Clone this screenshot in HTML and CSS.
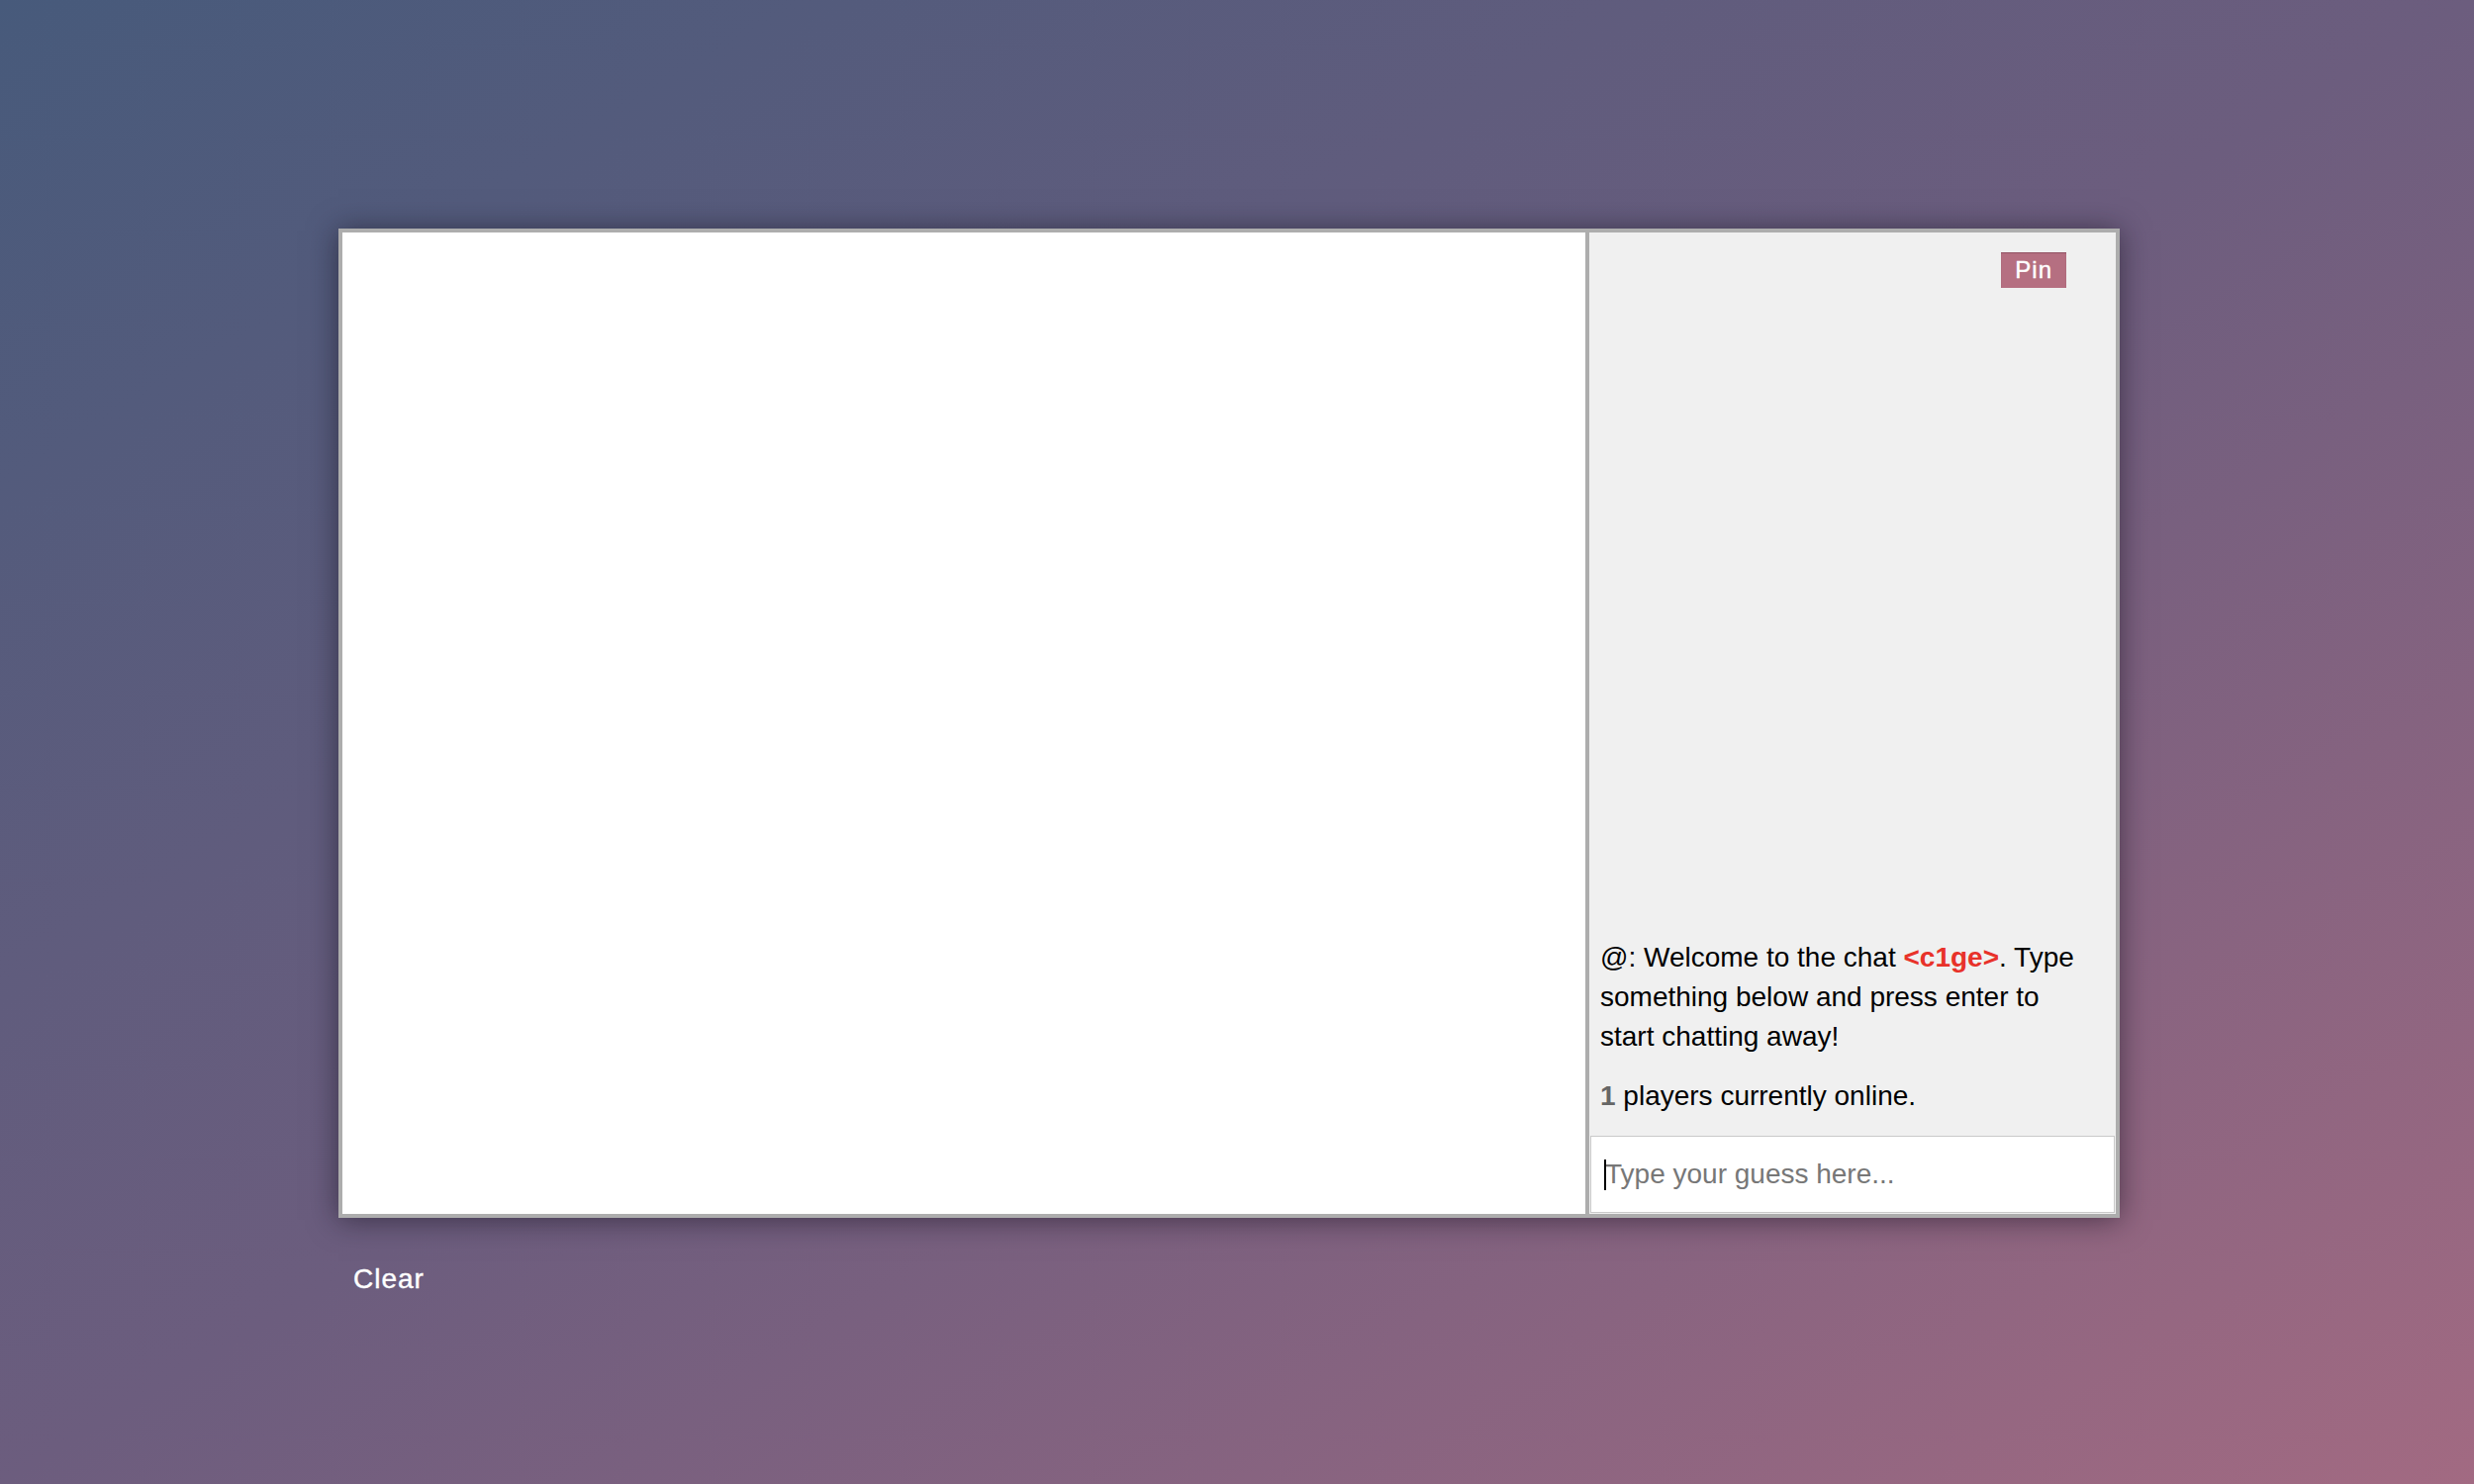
FILE: index.html
```html
<!DOCTYPE html>
<html>
<head>
<meta charset="utf-8">
<link rel="stylesheet" href="styles.css">
</head>
<body>
<div class="page">
  <div class="game">
    <div class="canvas"></div>
    <div class="chat">
      <button class="pin">Pin</button>
      <div class="messages">
        <p class="msg">@: Welcome to the chat <span class="name">&lt;c1ge&gt;</span>. Type something below and press enter to start chatting away!</p>
        <p class="msg"><span class="count">1</span> players currently online.</p>
      </div>
      <div class="guess-wrap">
        <input class="guess" type="text" placeholder="Type your guess here..." autofocus>
        <span class="caret"></span>
      </div>
    </div>
  </div>
  <div class="clear">Clear</div>
</div>
</body>
</html>
```

FILE: styles.css
```css
html, body {
  margin: 0;
  padding: 0;
  height: 100%;
}
body {
  background: linear-gradient(to bottom right, #475a7b 0%, #6c5d7e 50%, #a26a82 100%);
  font-family: "Liberation Sans", Arial, Helvetica, sans-serif;
  overflow: hidden;
}
.page {
  padding: 231px 0 0 342px;
}
.game {
  display: flex;
  width: 1800px;
  height: 1000px;
  box-sizing: border-box;
  border: 4px solid #adadad;
  box-shadow: 0 2px 28px rgba(20, 15, 30, 0.55);
}
.canvas {
  flex: 0 0 1256px;
  background: #fff;
  border-right: 4px solid #adadad;
}
.chat {
  flex: 1;
  position: relative;
  background: #f0f0f0;
  display: flex;
  flex-direction: column;
  justify-content: flex-end;
}
.pin {
  position: absolute;
  top: 20px;
  right: 50px;
  height: 36px;
  padding: 0 14px;
  border: none;
  background: #b56f81;
  color: #fff;
  font-family: "Liberation Sans", Arial, sans-serif;
  font-size: 24px;
  line-height: 36px;
  letter-spacing: 1px;
  -webkit-text-stroke: 0.4px #fff;
  box-shadow: inset 0 1px 1px rgba(80, 30, 45, 0.35);
}
.messages {
  padding: 0 26px 0 11px;
}
.msg {
  margin: 0 0 20px;
  font-size: 28px;
  line-height: 40px;
  color: #000;
}
.name {
  color: #e8322a;
  font-weight: bold;
}
.count {
  color: #666;
  font-weight: bold;
}
.guess-wrap {
  position: relative;
  margin: 0 1px 1px 1px;
}
.guess {
  display: block;
  width: 100%;
  height: 78px;
  box-sizing: border-box;
  border: 1px solid #c9c9c9;
  padding: 0 14px;
  background: #fff;
  font-family: "Liberation Sans", Arial, sans-serif;
  font-size: 28px;
  color: #000;
  outline: none;
  caret-color: #000;
}
.guess::placeholder {
  color: #777;
}
.caret {
  position: absolute;
  left: 14px;
  top: 24px;
  width: 2px;
  height: 31px;
  background: #000;
}
.clear {
  margin: 46px 0 0 15px;
  color: #fff;
  font-size: 28px;
  letter-spacing: 1px;
  -webkit-text-stroke: 0.4px #fff;
}
```
